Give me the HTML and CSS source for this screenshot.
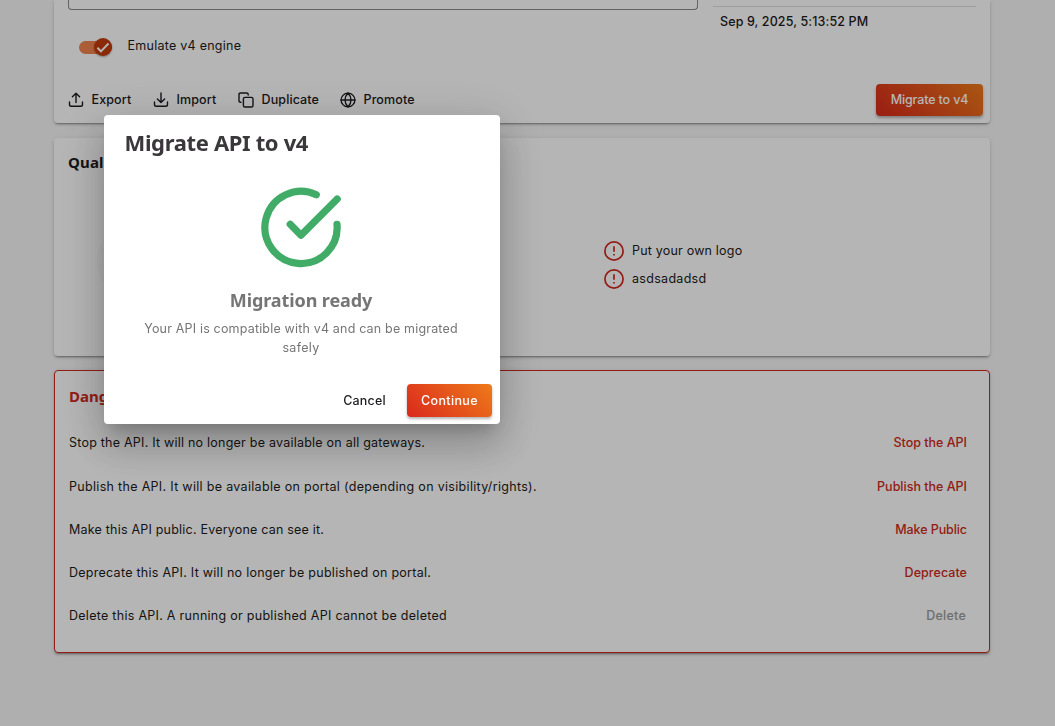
FILE: index.html
```
<!DOCTYPE html>
<html lang="en">
<head>
<meta charset="utf-8">
<title>Migrate API to v4</title>
<link rel="stylesheet" href="styles.css">
</head>
<body>
<main class="page">
  <section class="card general">
    <div class="general-top">
      <div class="textarea"></div>
      <div class="info"><span class="t date">Sep 9, 2025, 5:13:52 PM</span></div>
    </div>
    <div class="toggle-row">
      <span class="track"><span class="thumb"><svg width="19" height="19" viewBox="0 0 19 19"><path d="M3.600 9.800l3.700 3.700L15.300 5.300" fill="none" stroke="#fff" stroke-width="2"/></svg></span></span>
      <span class="t emulate">Emulate v4 engine</span>
    </div>
    <div class="actions">
      <div class="action export"><svg width="16" height="16" viewBox="0 0 16 16"><path d="M1.500 10v2.400q0 1.800 1.800 1.800h9.400q1.800 0 1.800-1.800V10M8 10.500V1.300M4.400 4.700 8 1.200l3.600 3.500"/></svg><span class="t">Export</span></div>
      <div class="action import"><svg width="16" height="16" viewBox="0 0 16 16"><path d="M1.500 10v2.400q0 1.800 1.800 1.800h9.400q1.800 0 1.800-1.800V10M8 1v9.400M4.400 7 8 10.500 11.600 7"/></svg><span class="t">Import</span></div>
      <div class="action duplicate"><svg width="16" height="16" viewBox="0 0 16 16"><rect x="5.400" y="5.400" width="9.600" height="9.600" rx="1.600"/><path d="M3 10.200H2.400Q1 10.200 1 8.800V2.400Q1 1 2.400 1H8.800Q10.200 1 10.200 2.400V3"/></svg><span class="t">Duplicate</span></div>
      <div class="action promote"><svg width="16" height="16" viewBox="0 0 16 16"><circle cx="8" cy="8" r="6.900"/><path d="M1 8h14M8 1c-4 4.200-4 9.800 0 14M8 1c4 4.200 4 9.800 0 14"/></svg><span class="t">Promote</span></div>
      <button class="primary migrate"><span class="t">Migrate to v4</span></button>
    </div>
  </section>
  <section class="card quality">
    <h2 class="heading quality-title">Quality</h2>
    <div class="quality-body">
      <div class="gauge"></div>
      <div class="checks">
        <div class="check"><svg width="20" height="20" viewBox="0 0 20 20"><circle cx="10" cy="10" r="9.100"/><path d="M10 5.300v5.500M10 13v1.400"/></svg><span class="t logo">Put your own logo</span></div>
        <div class="check"><svg width="20" height="20" viewBox="0 0 20 20"><circle cx="10" cy="10" r="9.100"/><path d="M10 5.300v5.500M10 13v1.400"/></svg><span class="t asd">asdsadadsd</span></div>
      </div>
    </div>
  </section>
  <section class="card danger">
    <h2 class="heading danger-title">Danger Zone</h2>
    <div class="row"><span class="t r1">Stop the API. It will no longer be available on all gateways.</span><span class="t link l1">Stop the API</span></div>
    <div class="row"><span class="t r2">Publish the API. It will be available on portal (depending on visibility/rights).</span><span class="t link l2">Publish the API</span></div>
    <div class="row"><span class="t r3">Make this API public. Everyone can see it.</span><span class="t link l3">Make Public</span></div>
    <div class="row"><span class="t r4">Deprecate this API. It will no longer be published on portal.</span><span class="t link l4">Deprecate</span></div>
    <div class="row"><span class="t r5">Delete this API. A running or published API cannot be deleted</span><span class="t link disabled">Delete</span></div>
  </section>
</main>
<div class="backdrop">
  <div class="dialog">
    <h1 class="heading dialog-title"><span>Migrate API to v4</span></h1>
    <div class="dialog-body">
      <svg class="ok" width="84" height="84" viewBox="0 0 84 84"><path d="M57.300 9.700A36.100 36.100 0 1 0 78 39.300M31.200 39.300 42 50.200 78.200 14" fill="none" stroke="#41ab68" stroke-width="7.200" stroke-linecap="round" stroke-linejoin="round"/></svg>
      <h3 class="heading ready"><span>Migration ready</span></h3>
      <p class="message"><span class="t m1">Your API is compatible with v4 and can be migrated</span><br><span class="t m2">safely</span></p>
    </div>
    <div class="dialog-actions">
      <button class="cancel"><span class="t">Cancel</span></button>
      <button class="primary continue"><span class="t">Continue</span></button>
    </div>
  </div>
</div>
</body>
</html>
```
FILE: styles.css
```
* { box-sizing: border-box; }
body { margin: 0; height: 726px; overflow: hidden; background: #f7f7f7; color: #1d1b20; font: 12.5px/20px Inter, "Noto Sans", sans-serif; }
.t { white-space: nowrap; }
.page { padding: 0 65px 0 54px; display: flex; flex-direction: column; }
.card { background: #fff; border-radius: 4px; box-shadow: 0 3px 1px -2px rgba(0,0,0,.2), 0 2px 2px rgba(0,0,0,.14), 0 1px 5px rgba(0,0,0,.12); }
.heading { margin: 0; font-family: "Noto Sans", sans-serif; font-weight: 700; white-space: nowrap; }
.general { height: 123px; border-top-left-radius: 0; border-top-right-radius: 0; }
.general-top { display: flex; padding: 0 14px; height: 36px; }
.textarea { width: 630px; height: 10px; border: 1px solid #8a8a8a; border-top: 0; border-radius: 0 0 4px 4px; }
.info { width: 263px; margin: 6px 0 0 15px; border-top: 1px solid #e0e0e0; padding: 5px 0 0 7px; font-weight: 500; }
.date { letter-spacing: .12px; }
.toggle-row { display: flex; align-items: center; height: 20px; padding-left: 25px; gap: 15.500px; }
.track { width: 33px; height: 13px; border-radius: 7px; background: #f1844f; display: flex; justify-content: flex-end; align-items: center; margin-top: 2px; }
.thumb { width: 18px; height: 18px; flex: none; border-radius: 50%; background: #c43c0c; box-shadow: 0 1px 2px rgba(0,0,0,.35); display: flex; align-items: center; justify-content: center; }
.emulate { letter-spacing: .26px; }
.actions { display: flex; align-items: center; height: 32px; margin-top: 28px; padding: 0 7px 0 14px; }
.action { display: flex; align-items: center; gap: 7.500px; font-weight: 500; letter-spacing: .12px; }
.action .t { padding-bottom: 1px; }
.action svg { fill: none; stroke: #1d1b20; stroke-width: 1.400; stroke-linecap: round; stroke-linejoin: round; }
.export { width: 85px; }
.import { width: 85px; }
.duplicate { width: 102px; }
.primary { border: 0; border-radius: 4px; color: #fff; font: 500 12.5px/20px Inter, sans-serif; background: linear-gradient(45deg, #da291c, #ee7a1a); box-shadow: 0 2px 3px rgba(0,0,0,.3); padding: 0 0 1px; display: flex; align-items: center; justify-content: center; }
.migrate { width: 107px; height: 32px; margin-left: auto; letter-spacing: -.14px; }
.quality { height: 218px; margin-top: 15px; padding: 12px 14px; }
.quality-title { font-size: 15px; line-height: 24px; letter-spacing: .15px; }
.quality-body { display: flex; margin-top: 37px; }
.gauge { width: 132px; height: 100px; margin: 0 375px 0 29px; border-radius: 50%; background: #fafafa; }
.checks { display: flex; flex-direction: column; gap: 8px; padding-top: 30px; }
.check { display: flex; align-items: center; gap: 8px; height: 20px; }
.check svg { fill: none; stroke: #cf2a20; stroke-width: 1.700; }
.logo { letter-spacing: .2px; }
.asd { letter-spacing: .3px; }
.danger { height: 283px; margin-top: 14px; border: 1px solid #cf2a20; padding: 13px 22px 0 14px; }
.danger-title { color: #cf2a20; font-size: 15px; line-height: 24px; margin-bottom: 13.700px; }
.row { display: flex; justify-content: space-between; align-items: center; height: 43.250px; }
.r1 { letter-spacing: .228px; }
.r2 { letter-spacing: .313px; }
.r3 { letter-spacing: .21px; }
.r4 { letter-spacing: .267px; }
.r5 { letter-spacing: .28px; }
.link { color: #cf2a20; font-weight: 500; }
.l3 { letter-spacing: -.08px; }
.l4 { letter-spacing: .05px; }
.disabled { color: #9b9b9b; margin-right: 1px; letter-spacing: .25px; }
.backdrop { position: fixed; inset: 0; background: rgba(0,0,0,.29); padding: 115px 0 0 104px; }
.dialog { width: 396px; height: 309px; background: #fff; border-radius: 4px; box-shadow: 0 11px 15px -7px rgba(0,0,0,.2), 0 24px 38px 3px rgba(0,0,0,.14), 0 9px 46px 8px rgba(0,0,0,.12); }
.dialog-title { font-size: 22px; line-height: 32px; color: #3a383a; padding: 11px 20.500px 0; letter-spacing: -.35px; }
.dialog-body { display: flex; flex-direction: column; align-items: center; padding: 27px 2px 0 0; color: #757575; }
.ready { font-size: 18px; line-height: 28px; margin-top: 17px; letter-spacing: -.1px; }
.message { margin: 5px 0 0; text-align: center; line-height: 19px; }
.m1 { letter-spacing: .18px; }
.m2 { letter-spacing: .3px; }
.dialog-actions { display: flex; justify-content: flex-end; padding-right: 8px; margin-top: 27px; }
.cancel { border: 0; background: none; padding: 1px 0 0; width: 85px; font: 500 12.5px/20px Inter, sans-serif; color: #1d1b20; letter-spacing: .15px; }
.continue { width: 85px; height: 33px; padding: 1px 0 0; letter-spacing: .35px; }
```
